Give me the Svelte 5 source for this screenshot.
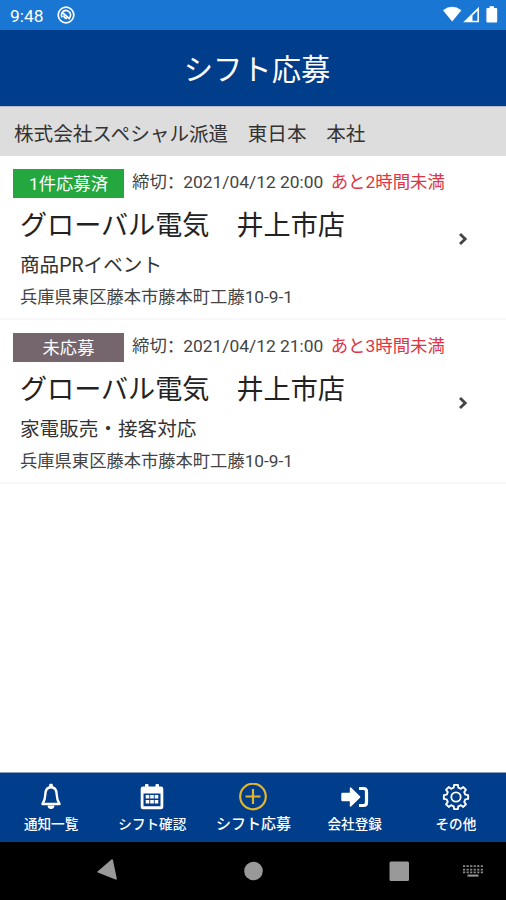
<script lang="ts">
	const company = '株式会社スペシャル派遣　東日本　本社';

	const shifts = [
		{
			applied: true,
			status: '1件応募済',
			deadline: '2021/04/12 20:00',
			remaining: 'あと2時間未満',
			shop: 'グローバル電気　井上市店',
			job: '商品PRイベント',
			address: '兵庫県東区藤本市藤本町工藤10-9-1'
		},
		{
			applied: false,
			status: '未応募',
			deadline: '2021/04/12 21:00',
			remaining: 'あと3時間未満',
			shop: 'グローバル電気　井上市店',
			job: '家電販売・接客対応',
			address: '兵庫県東区藤本市藤本町工藤10-9-1'
		}
	];

	const tabs = [
		{ id: 'notice', label: '通知一覧' },
		{ id: 'calendar', label: 'シフト確認' },
		{ id: 'apply', label: 'シフト応募' },
		{ id: 'company', label: '会社登録' },
		{ id: 'other', label: 'その他' }
	];

	let current = 'apply';

	// Outline of the 8-tooth gear, centred on 14,14
	const gear = (() => {
		const points: string[] = [];
		for (let i = 0; i < 8; i++) {
			for (const [offset, r] of [[-14, 9.6], [-9, 12.3], [9, 12.3], [14, 9.6]]) {
				const a = ((i * 45 + offset) * Math.PI) / 180;
				points.push(`${(14 + r * Math.sin(a)).toFixed(2)} ${(14 - r * Math.cos(a)).toFixed(2)}`);
			}
		}
		return `M${points.join('L')}Z`;
	})();
</script>

<div class="screen">
	<div class="status-bar">
		<span class="clock">9:48</span>
		<svg class="app-mark" width="18" height="18" viewBox="0 0 18 18">
			<circle cx="9" cy="9" r="7.8" fill="none" stroke="#fff" stroke-width="1.7" />
			<path d="M5.2 11.4A4.5 4.5 0 1 1 12 12.4M5.6 6.6L12.8 13.2M7 9.5A2.4 2.4 0 0 0 10 12.2" fill="none" stroke="#fff" stroke-width="1.8" />
		</svg>
		<svg class="signals" width="56" height="18" viewBox="0 0 56 18">
			<path d="M0 4.2Q9 -2.6 18.4 4.2L9.2 15.5Z" fill="#fff" />
			<path d="M20.2 16.3L36 .8V16.3Z" fill="#fff" />
			<path d="M29.5 14.8V9.6L34.4 4.8V14.8Z" fill="#1976d2" />
			<path d="M46.5 .3h4.5v1.8h2.2a1 1 0 0 1 1 1v12.4a1 1 0 0 1-1 1h-8.8a1 1 0 0 1-1-1V3.1a1 1 0 0 1 1-1h2.1z" fill="#fff" />
		</svg>
	</div>

	<header class="app-header">
		<h1>シフト応募</h1>
	</header>

	<div class="company">{company}</div>

	<main class="shift-list">
		{#each shifts as shift}
			<div class="shift">
				<div class="shift-top">
					<span class="badge" class:applied={shift.applied}>{shift.status}</span>
					<span class="deadline">
						<span class="caption">締切<span class="colon">：</span></span>{shift.deadline}
						<span class="remaining">{shift.remaining}</span>
					</span>
				</div>
				<div class="shift-body">
					<div class="shift-info">
						<h2>{shift.shop}</h2>
						<p class="job">{shift.job}</p>
						<p class="address">{shift.address}</p>
					</div>
					<svg class="chevron" width="10" height="14" viewBox="0 0 10 14">
						<path d="M2 2L7.2 7L2 12" fill="none" stroke="#444" stroke-width="2.8" />
					</svg>
				</div>
			</div>
		{/each}
	</main>

	<nav class="tab-bar">
		{#each tabs as tab}
			<button class="tab" class:active={tab.id === current} on:click={() => (current = tab.id)}>
				<svg width="28" height="28" viewBox="0 0 28 28" fill="none" stroke="currentColor">
					{#if tab.id === 'notice'}
						<path d="M14 4.2C9.8 4.2 8.4 8 8.3 11.5C8.2 15.2 7.6 18 5.5 21H22.5C20.4 18 19.8 15.2 19.7 11.5C19.6 8 18.2 4.2 14 4.2Z" stroke-width="2.4" stroke-linejoin="round" />
						<path d="M12.2 1.8a1 1 0 0 1 1-1h1.6a1 1 0 0 1 1 1V5h-3.6zM10.6 22.5h6.8a3.4 3.4 0 0 1-6.8 0z" fill="currentColor" stroke="none" />
					{:else if tab.id === 'calendar'}
						<path fill="currentColor" stroke="none" fill-rule="evenodd" d="M5 3.5h2V2a1 1 0 0 1 1-1h1.5a1 1 0 0 1 1 1v1.5h7V2a1 1 0 0 1 1-1H20a1 1 0 0 1 1 1v1.5h2a2.3 2.3 0 0 1 2.3 2.3v18.1a2.3 2.3 0 0 1-2.3 2.3H5a2.3 2.3 0 0 1-2.3-2.3V5.8A2.3 2.3 0 0 1 5 3.5zM5.5 10.5v12.7h17V10.5z" />
						<path fill="currentColor" stroke="none" d="M7.7 12h3.6v3.6H7.7zm4.5 0h3.6v3.6h-3.6zm4.5 0h3.6v3.6h-3.6zM7.7 16.9h3.6v3.6H7.7zm4.5 0h3.6v3.6h-3.6zm4.5 0h3.6v3.6h-3.6z" />
					{:else if tab.id === 'apply'}
						<circle cx="14" cy="13.5" r="12.8" stroke-width="2.2" />
						<path d="M14 6v15M6.5 13.5h15" stroke-width="2.2" />
					{:else if tab.id === 'company'}
						<path fill="currentColor" stroke="none" d="M1.6 9.8H8.8V5.3q0-1.9 1.5-.6l8.7 8.6q.8.700 0 1.400l-8.700 8.600q-1.500 1.300-1.500-.6v-4.500H1.600q-1.300 0-1.300-1.300v-5.800q0-1.300 1.300-1.300z" />
						<path d="M18 5.500h4.500q3 0 3 3v11q0 3-3 3H18" stroke-width="3.200" />
					{:else}
						<path d={gear} stroke-width="1.9" stroke-linejoin="round" />
						<circle cx="14" cy="14" r="4.7" stroke-width="1.8" />
					{/if}
				</svg>
				<span>{tab.label}</span>
			</button>
		{/each}
	</nav>

	<div class="system-nav">
		<svg width="506" height="58" viewBox="0 0 506 58" fill="#999">
			<path d="M97.5 29.5L111.5 17.5Q112.7 17 113 18.3L116.8 36.5Q116.9 38 115.5 37.5L97.8 30.6Q96.8 30.2 97.5 29.5Z" />
			<circle cx="253.5" cy="29" r="9.3" />
			<rect x="389.5" y="19.5" width="19.5" height="19.5" rx="1.5" />
			<path d="M463 24.2h20M463 27.6h20M463 30.4h20" stroke="#888" stroke-width="1.8" stroke-dasharray="2.2 1.35" />
			<path d="M467.5 33.6h11" stroke="#999" stroke-width="2" />
		</svg>
	</div>
</div>

<style>
	:global(body) {
		margin: 0;
		background: #fff;
	}

	.screen {
		display: flex;
		flex-direction: column;
		height: 900px;
		overflow: hidden;
		background: #fff;
		color: #222;
		font-family: Roboto, 'Noto Sans CJK JP', sans-serif;
		font-weight: 400;
	}

	.status-bar {
		display: flex;
		align-items: center;
		height: 30px;
		padding: 0 7px 0 10px;
		background: #1976d2;
		color: #fff;
		box-sizing: border-box;
	}

	.clock {
		width: 47px;
		font-size: 17.4px;
		line-height: 30px;
		padding-top: 2px;
	}

	.signals {
		margin-left: auto;
	}

	.app-header {
		display: flex;
		align-items: center;
		justify-content: center;
		height: 76px;
		background: #003d8b;
		color: #fff;
	}

	h1 {
		margin: 0;
		padding: 4px 0 0 8px;
		font-size: 29.3px;
		line-height: 40px;
		font-weight: 400;
	}

	.company {
		height: 50px;
		padding: 0 14px;
		background: #ddd;
		border-top: 1px solid #b4bdce;
		box-sizing: border-box;
		font-size: 19.6px;
		line-height: 55px;
		color: #333;
		white-space: nowrap;
	}

	.shift-list {
		flex: 1;
	}

	.shift {
		height: 164px;
		padding: 10px 38px 0 13px;
		border-bottom: 2px solid #f8f8f8;
		box-sizing: border-box;
	}

	.shift-top {
		display: flex;
		align-items: flex-start;
		gap: 8px;
		padding-top: 3px;
	}

	.badge {
		width: 111px;
		height: 29px;
		background: #75666d;
		color: #fff;
		font-size: 17.3px;
		line-height: 31px;
		text-align: center;
	}

	.badge.applied {
		background: #23a73e;
	}

	.deadline {
		font-size: 17.4px;
		line-height: 23px;
		white-space: nowrap;
		color: #444;
	}

	.caption {
		margin-right: -1px;
	}

	/* the SC face sets the full-width colon to the left of its cell */
	.colon {
		font-family: 'Noto Sans CJK SC', sans-serif;
	}

	.remaining {
		margin-left: 3px;
		color: #dc3545;
	}

	.shift-body {
		display: flex;
		align-items: center;
		justify-content: space-between;
		padding-left: 7px;
	}

	h2 {
		margin: 0;
		padding-top: 1px;
		font-size: 27.1px;
		line-height: 55px;
		font-weight: 400;
		white-space: nowrap;
	}

	p {
		margin: 0;
		white-space: nowrap;
	}

	.job {
		font-size: 19.6px;
		line-height: 24px;
		color: #333;
	}

	.address {
		font-size: 17.3px;
		line-height: 39px;
		color: #444;
	}

	.chevron {
		margin-bottom: 37px;
	}

	.tab-bar {
		display: grid;
		grid-template-columns: repeat(5, 1fr);
		height: 70px;
		background: #003d8b;
		border-top: 1px solid #8a9fc6;
		box-sizing: border-box;
	}

	.tab {
		display: flex;
		flex-direction: column;
		align-items: center;
		padding: 10px 0 0 1px;
		border: 0;
		background: none;
		color: #fff;
		font-family: inherit;
		font-size: 13.6px;
		font-weight: 500;
		line-height: 27px;
		white-space: nowrap;
	}

	.tab.active {
		font-size: 15px;
	}

	.tab.active svg {
		color: #e3b52c;
	}

	.tab svg {
		flex: none;
	}

	.system-nav {
		height: 58px;
		background: #000;
	}
</style>
